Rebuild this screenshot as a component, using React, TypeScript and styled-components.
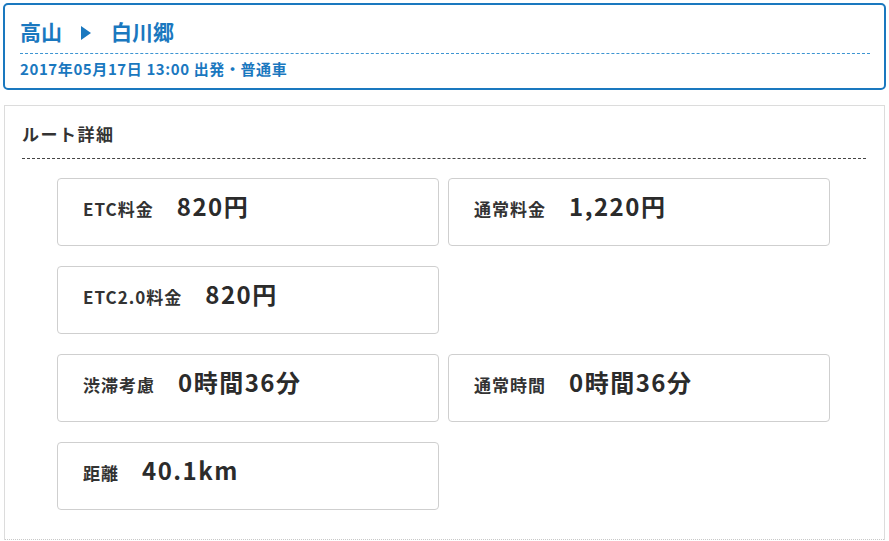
import styled, { createGlobalStyle } from 'styled-components';

const GlobalStyle = createGlobalStyle`
  body {
    margin: 0;
    background: #fff;
    font-family: "Noto Sans CJK JP", "Noto Sans", sans-serif;
    color: #333;
  }
`;

const Page = styled.div`
  padding: 3px 3px 0;
`;

const Cabecalho = styled.div`
  border: 2px solid #1a78bf;
  border-radius: 5px;
  padding: 11px 14px 9px 15px;
`;

const Rota = styled.h1`
  margin: 0;
  display: flex;
  align-items: center;
  font-size: 21px;
  line-height: 30px;
  font-weight: 700;
  color: #1a78bf;
  padding-bottom: 7px;
  border-bottom: 1px dashed #3d95d2;
`;

const Seta = styled.span`
  display: inline-block;
  width: 0;
  height: 0;
  margin: 4px 20px 0 19px;
  border-top: 7px solid transparent;
  border-bottom: 7px solid transparent;
  border-left: 10px solid #1a78bf;
`;

const Subtitulo = styled.p`
  margin: 5px 0 0;
  font-size: 15px;
  line-height: 20px;
  letter-spacing: 0.6px;
  font-weight: 700;
  color: #1a78bf;
`;

const Painel = styled.section`
  margin: 15px 1px 0;
  border: 1px solid #dcdcdc;
  border-bottom: none;
  padding: 14px 18px 0 17px;
`;

const Titulo = styled.h2`
  margin: 0;
  font-size: 17px;
  line-height: 28px;
  letter-spacing: 1.5px;
  font-weight: 700;
  color: #333;
  padding-bottom: 10px;
  border-bottom: 1px dashed #444;
`;

const Grade = styled.div`
  display: grid;
  grid-template-columns: 382px 382px;
  column-gap: 9px;
  row-gap: 20px;
  margin: 19px 0 0 35px;
  padding-bottom: 29px;
`;

const Cartao = styled.div<{ $coluna?: number }>`
  grid-column: ${({ $coluna }) => $coluna ?? 'auto'};
  box-sizing: border-box;
  height: 68px;
  border: 1px solid #cfcfcf;
  border-radius: 4px;
  padding: 10px 25px;
  display: flex;
  align-items: baseline;
  background: #fff;
`;

const Rotulo = styled.span`
  font-size: 17px;
  letter-spacing: 1px;
  font-weight: 700;
  color: #333;
  margin-right: 23px;
`;

const Valor = styled.span`
  font-size: 24px;
  line-height: 34px;
  letter-spacing: 1.5px;
  font-weight: 700;
  color: #2b2b2b;
`;

const Divisor = styled.div`
  margin: 0 -18px 0 -17px;
  border-bottom: 1px dotted #c8c8c8;
`;

const itens = [
  { rotulo: 'ETC料金', valor: '820円', coluna: 1 },
  { rotulo: '通常料金', valor: '1,220円', coluna: 2 },
  { rotulo: 'ETC2.0料金', valor: '820円', coluna: 1 },
  { rotulo: '渋滞考慮', valor: '0時間36分', coluna: 1 },
  { rotulo: '通常時間', valor: '0時間36分', coluna: 2 },
  { rotulo: '距離', valor: '40.1km', coluna: 1 },
];

export default function App() {
  return (
    <>
      <GlobalStyle />
      <Page>
        <Cabecalho>
          <Rota>
            高山<Seta />白川郷
          </Rota>
          <Subtitulo>2017年05月17日 13:00 出発・普通車</Subtitulo>
        </Cabecalho>
        <Painel>
          <Titulo>ルート詳細</Titulo>
          <Grade>
            {itens.map((item) => (
              <Cartao key={item.rotulo} $coluna={item.coluna}>
                <Rotulo>{item.rotulo}</Rotulo>
                <Valor>{item.valor}</Valor>
              </Cartao>
            ))}
          </Grade>
          <Divisor />
        </Painel>
      </Page>
    </>
  );
}
